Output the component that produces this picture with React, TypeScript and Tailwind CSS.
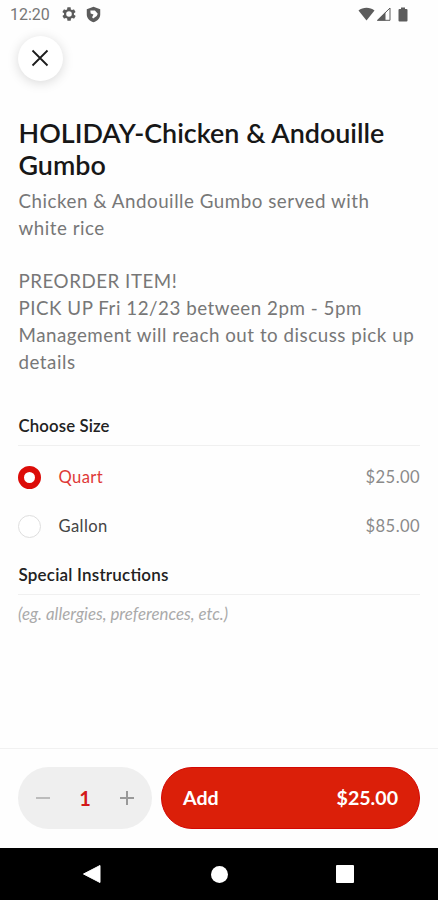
import React, { useState } from 'react'

const sizes = [
  { name: 'Quart', price: 25 },
  { name: 'Gallon', price: 85 },
]

function StatusBar() {
  return (
    <div className="flex h-7 items-center justify-between pl-[10px] pr-[30px] text-[#5c5c5c]">
      <div className="flex items-center">
        <span className="w-[39px] whitespace-nowrap pt-px font-['Roboto',sans-serif] text-[16px] leading-7 text-[#777]">12:20</span>
        <svg className="ml-[12px] size-4" viewBox="0 0 24 24" fill="currentColor">
          <path fillRule="evenodd" d="M19.4 13a7.5 7.5 0 0 0 0-2l2.1-1.6a.5.5 0 0 0 .1-.7l-2-3.4a.5.5 0 0 0-.6-.2l-2.5 1a7.3 7.3 0 0 0-1.7-1L14.5 2.4a.5.5 0 0 0-.5-.4h-4a.5.5 0 0 0-.5.4l-.4 2.7a7.3 7.3 0 0 0-1.7 1l-2.5-1a.5.5 0 0 0-.6.2l-2 3.4a.5.5 0 0 0 .1.7L4.6 11a7.5 7.5 0 0 0 0 2l-2.1 1.6a.5.5 0 0 0-.1.7l2 3.4c.1.2.4.3.6.2l2.5-1a7.3 7.3 0 0 0 1.7 1l.4 2.7c0 .2.2.4.5.4h4c.3 0 .5-.2.5-.4l.4-2.7a7.3 7.3 0 0 0 1.7-1l2.5 1c.2.1.5 0 .6-.2l2-3.4a.5.5 0 0 0-.1-.7zM12 16.2a4.2 4.2 0 1 1 0-8.400 4.200 4.200 0 0 1 0 8.400z" />
        </svg>
        <svg className="ml-[8px] size-[17px]" viewBox="0 0 24 24" fill="currentColor">
          <path fillRule="evenodd" d="M12 1 2.500 4.500V12c0 5 3.800 9.300 9.500 11 5.700-1.700 9.500-6 9.500-11V4.500zM7.500 6.500h6.500l4 4.500-1.500 3-5 3.500L10 16l2-4-4-1.500z" />
        </svg>
      </div>
      <div className="flex items-center">
        <svg className="h-[14px] w-[17px]" viewBox="0 0 17 14" fill="currentColor">
          <path d="M.5 3.500C5-.2 12-.2 16.500 3.500L8.500 13.500z" />
        </svg>
        <svg className="ml-[1px] h-[14px] w-[15px]" viewBox="0 0 15 14">
          <path d="M1.500 13.300 14 1v12.300z" fill="none" stroke="currentColor" strokeWidth="1" />
          <path d="M1 13.500 9.500 5v8.500z" fill="currentColor" />
        </svg>
        <svg className="ml-[7px] h-[15px] w-[10px]" viewBox="0 0 10 15" fill="currentColor">
          <path d="M3 .5h4V2h1.500q1 0 1 1v10.500q0 1-1 1h-7q-1 0-1-1V3q0-1 1-1H3z" />
        </svg>
      </div>
    </div>
  )
}

function NavBar() {
  return (
    <div className="flex h-[52px] items-center bg-black pl-[82px]">
      <svg className="h-5 w-[19px]" viewBox="0 0 19 20" fill="white">
        <path d="M1.500 10 18 1.500v17z" stroke="white" strokeWidth="1" strokeLinejoin="round" />
      </svg>
      <div className="ml-[110px] size-[17px] rounded-full bg-white" />
      <div className="ml-[108px] size-[18px] rounded-[1px] bg-white" />
    </div>
  )
}

export default function App() {
  const [size, setSize] = useState(0)
  const [qty, setQty] = useState(1)
  const total = '$' + (sizes[size].price * qty).toFixed(2)

  return (
    <div className="flex h-[900px] w-[438px] flex-col overflow-hidden bg-[#fefefe] font-['Lato',sans-serif]">
      <StatusBar />
      <main className="flex-1 px-[18px] pt-2">
        <button className="flex size-[45px] items-center justify-center rounded-full bg-white pr-px pb-px shadow-[0_2px_12px_rgba(0,0,0,0.15)]">
          <svg className="size-[18px]" viewBox="0 0 18 18" stroke="#1c1c1c" strokeWidth="1.8">
            <path d="m1.500 1.500 15 15m0-15-15 15" />
          </svg>
        </button>

        <h1 className="mt-[36px] pl-[0.5px] text-[26.9px] font-semibold leading-8 text-[#171717]">
          HOLIDAY-Chicken &amp; Andouille<br />Gumbo
        </h1>
        <p className="mt-[7px] whitespace-pre pl-[0.5px] text-[18.75px] leading-[26.8px] tracking-[0.52px] text-[#777]">
          {'Chicken & Andouille Gumbo served with\nwhite rice\n\nPREORDER ITEM!\nPICK UP Fri 12/23 between 2pm - 5pm\nManagement will reach out to discuss pick up\ndetails'}
        </p>

        <h2 className="mt-[38px] border-b border-[#f0f0f0] pb-[7px] pl-[0.5px] text-[16.800px] font-semibold leading-6 tracking-[0.12px] text-[#222]">Choose Size</h2>
        <div className="pt-[7px]">
          {sizes.map((s, i) => (
            <button key={s.name} className="flex h-[49px] w-full items-center text-[16.6px] tracking-[0.4px]" onClick={() => setSize(i)}>
              <span className={i === size ? 'size-[23px] rounded-full border-[6px] border-[#dc0c08] bg-white' : 'size-[23px] rounded-full border border-[#dedede] bg-white'} />
              <span className={i === size ? 'ml-[17.5px] text-[#df3937]' : 'ml-[17.5px] text-[#444]'}>{s.name}</span>
              <span className="ml-auto text-[#8a8a8a]">${s.price.toFixed(2)}</span>
            </button>
          ))}
        </div>

        <h2 className="mt-3 border-b border-[#f0f0f0] pb-[7px] pl-[0.5px] text-[17px] font-semibold leading-6 tracking-[0.2px] text-[#222] [font-feature-settings:'liga'_1]">Special Instructions</h2>
        <input className="mt-[7px] block h-6 w-full text-[16.85px] italic outline-none placeholder:text-[#aaa]" placeholder="(eg. allergies, preferences, etc.)" />
      </main>

      <footer className="flex h-[100px] gap-[9px] border-t border-[#f1f1f1] px-[18px] pt-[18px]">
        <div className="flex h-[62px] w-[134px] items-center justify-between rounded-full bg-[#efefef] px-[18px]">
          <button onClick={() => setQty(Math.max(1, qty - 1))}>
            <svg className="size-[14px]" viewBox="0 0 14 14"><path d="M0 7h14" stroke="#bcbcbc" strokeWidth="2" /></svg>
          </button>
          <span className="text-[20px] font-bold leading-6 text-[#d3191a]">{qty}</span>
          <button onClick={() => setQty(qty + 1)}>
            <svg className="size-[14px]" viewBox="0 0 14 14"><path d="M0 7h14M7 0v14" stroke="#999" strokeWidth="2" /></svg>
          </button>
        </div>
        <button className="flex h-[62px] flex-1 items-center justify-between rounded-full border border-[#d30804] bg-[#db1f09] px-[21px] text-[19.600px] font-bold text-white">
          <span>Add</span>
          <span>{total}</span>
        </button>
      </footer>
      <NavBar />
    </div>
  )
}
